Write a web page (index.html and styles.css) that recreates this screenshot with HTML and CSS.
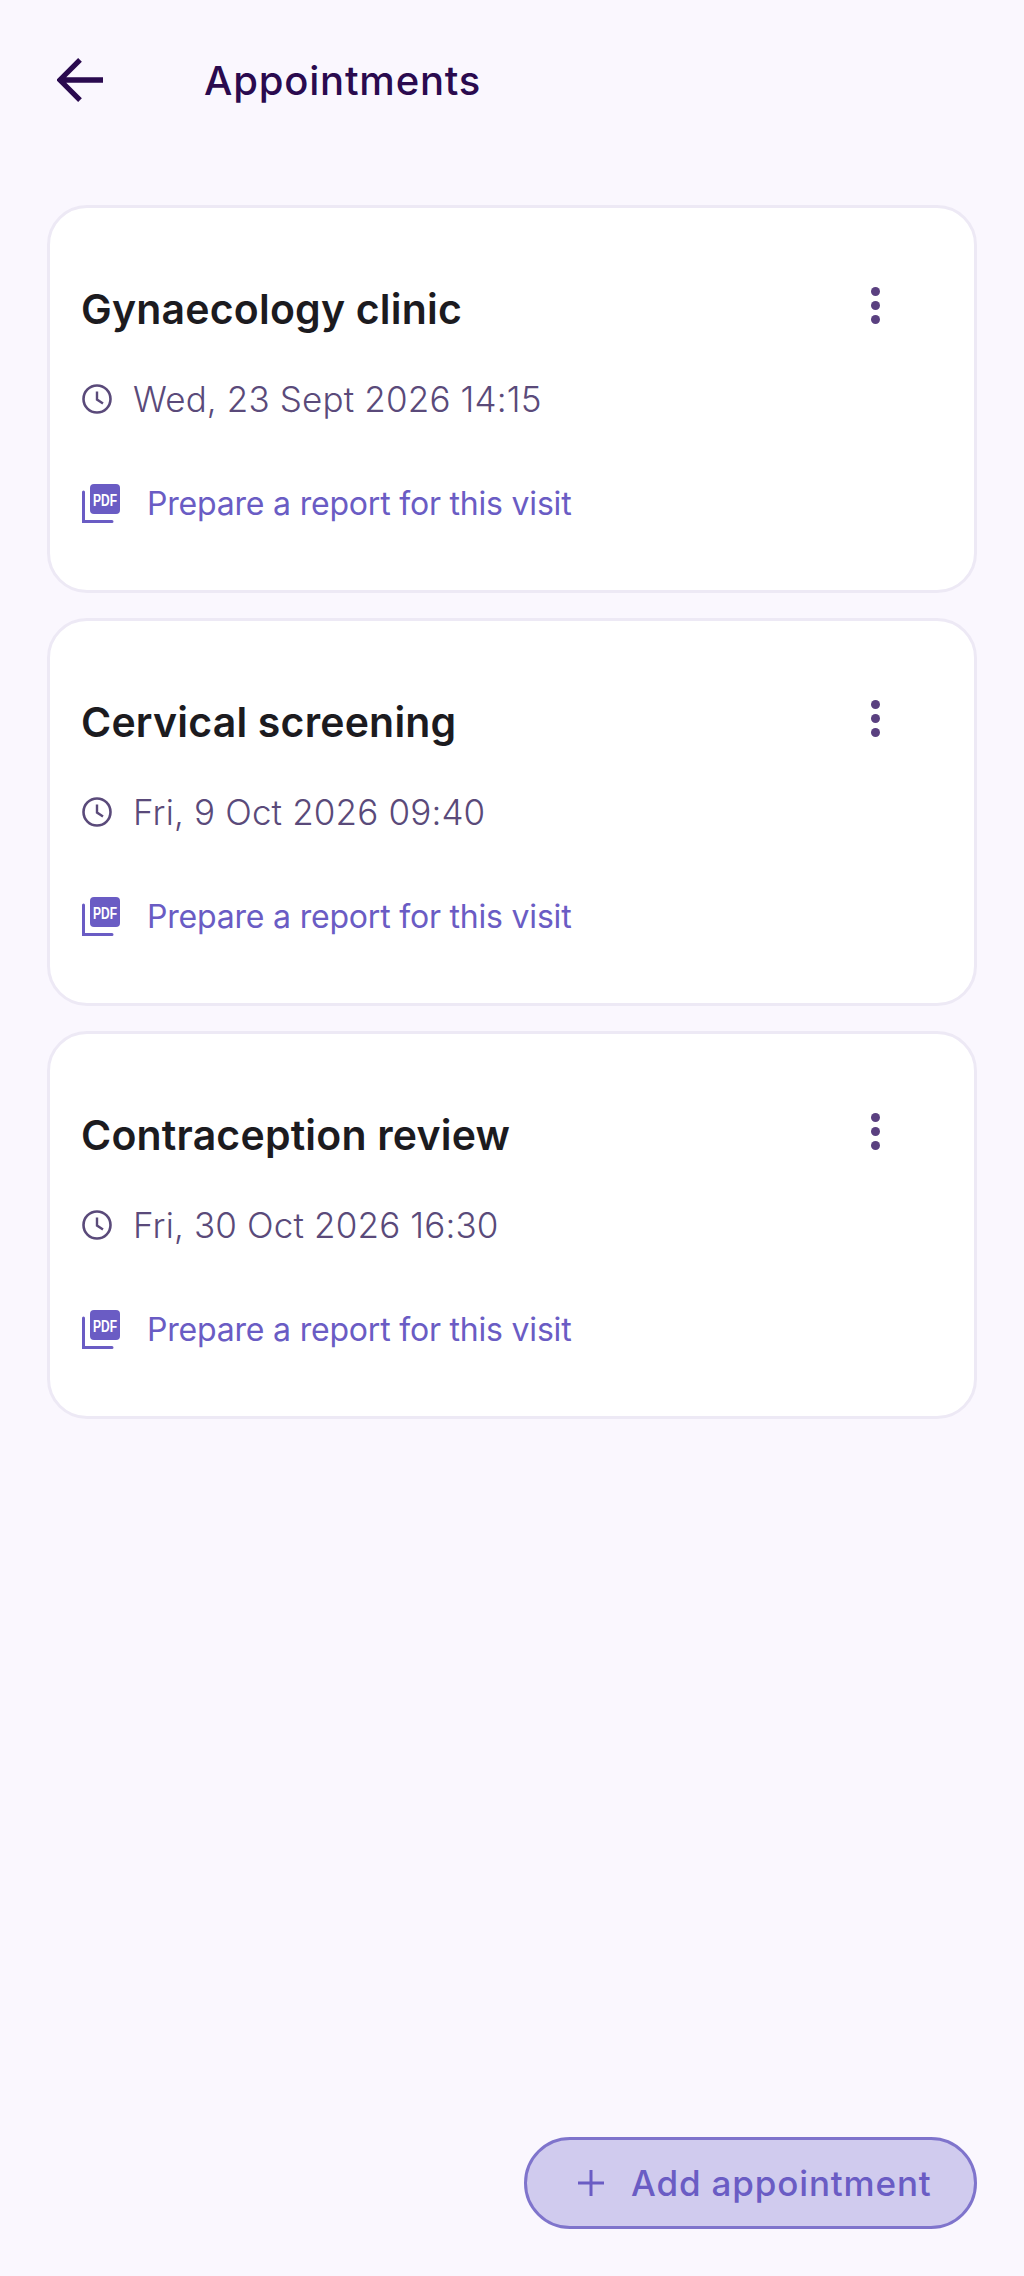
FILE: index.html
```html
<!DOCTYPE html>
<html>
<head>
  <meta charset="utf-8">
  <title>Appointments</title>
  <link rel="stylesheet" href="styles.css">
</head>
<body>
  <div class="header">
    <svg class="back-icon" viewBox="0 0 48 48"><path d="M24 3 L3 24 L24 45 M3 24 H48" fill="none" stroke="#2a0a4f" stroke-width="5.5"/></svg>
    <h1>Appointments</h1>
  </div>

  <div class="list">
    <div class="card">
      <div class="card-top">
        <h2>Gynaecology clinic</h2>
        <div class="more"><span></span><span></span><span></span></div>
      </div>
      <div class="when">
        <svg class="clock-icon" viewBox="0 0 30 30"><circle cx="15" cy="15" r="13.5" fill="none" stroke="#5a4a7a" stroke-width="2.6"/><path d="M15 7.5 V15.5 L21 19.5" fill="none" stroke="#5a4a7a" stroke-width="2.4"/></svg>
        <span>Wed, 23 Sept 2026 14:15</span>
      </div>
      <div class="report">
        <svg class="pdf-icon" viewBox="0 0 39 39"><path d="M1.5 8 V37.5 H30" fill="none" stroke="#6a5cc4" stroke-width="3" stroke-linecap="round"/><rect x="8" y="0" width="30" height="30" rx="4" fill="#6a5cc4"/><text transform="translate(11 22) scale(1 1.45)" class="pdf-text">PDF</text></svg>
        <span>Prepare a report for this visit</span>
      </div>
    </div>

    <div class="card">
      <div class="card-top">
        <h2>Cervical screening</h2>
        <div class="more"><span></span><span></span><span></span></div>
      </div>
      <div class="when">
        <svg class="clock-icon" viewBox="0 0 30 30"><circle cx="15" cy="15" r="13.5" fill="none" stroke="#5a4a7a" stroke-width="2.6"/><path d="M15 7.5 V15.5 L21 19.5" fill="none" stroke="#5a4a7a" stroke-width="2.4"/></svg>
        <span>Fri, 9 Oct 2026 09:40</span>
      </div>
      <div class="report">
        <svg class="pdf-icon" viewBox="0 0 39 39"><path d="M1.5 8 V37.5 H30" fill="none" stroke="#6a5cc4" stroke-width="3" stroke-linecap="round"/><rect x="8" y="0" width="30" height="30" rx="4" fill="#6a5cc4"/><text transform="translate(11 22) scale(1 1.45)" class="pdf-text">PDF</text></svg>
        <span>Prepare a report for this visit</span>
      </div>
    </div>

    <div class="card">
      <div class="card-top">
        <h2>Contraception review</h2>
        <div class="more"><span></span><span></span><span></span></div>
      </div>
      <div class="when">
        <svg class="clock-icon" viewBox="0 0 30 30"><circle cx="15" cy="15" r="13.5" fill="none" stroke="#5a4a7a" stroke-width="2.6"/><path d="M15 7.5 V15.5 L21 19.5" fill="none" stroke="#5a4a7a" stroke-width="2.4"/></svg>
        <span>Fri, 30 Oct 2026 16:30</span>
      </div>
      <div class="report">
        <svg class="pdf-icon" viewBox="0 0 39 39"><path d="M1.5 8 V37.5 H30" fill="none" stroke="#6a5cc4" stroke-width="3" stroke-linecap="round"/><rect x="8" y="0" width="30" height="30" rx="4" fill="#6a5cc4"/><text transform="translate(11 22) scale(1 1.45)" class="pdf-text">PDF</text></svg>
        <span>Prepare a report for this visit</span>
      </div>
    </div>
  </div>

  <div class="footer">
    <button class="add-button">
      <svg class="plus-icon" viewBox="0 0 28 28"><path d="M14 1 V27 M1 14 H27" fill="none" stroke="#6a5cc4" stroke-width="3"/></svg>
      <span>Add appointment</span>
    </button>
  </div>
</body>
</html>
```

FILE: styles.css
```css
html, body {
  height: 100%;
}

body {
  margin: 0;
  height: 2276px;
  box-sizing: border-box;
  display: flex;
  flex-direction: column;
  padding: 0 47px 47px;
  background: #faf7fe;
  font-family: Inter, "Noto Sans", sans-serif;
}

.header {
  display: flex;
  align-items: center;
  height: 160px;
  padding-left: 10px;
}

.back-icon {
  width: 46px;
  height: 46px;
  flex-shrink: 0;
}

.header h1 {
  margin: 0 0 0 101px;
  font-size: 40px;
  font-weight: 500;
  letter-spacing: 0.8px;
  color: #2a0a4f;
}

.list {
  display: flex;
  flex-direction: column;
  gap: 25px;
  margin-top: 45px;
}

.card {
  height: 388px;
  box-sizing: border-box;
  padding: 0 31px;
  background: #fff;
  border: 3px solid #ede9f5;
  border-radius: 40px;
}

.card-top {
  display: flex;
  justify-content: space-between;
  align-items: center;
  height: 90px;
  margin-top: 56px;
}

.card-top h2 {
  margin: 0;
  font-size: 41px;
  font-weight: 600;
  letter-spacing: 0.2px;
  color: #1c1b1f;
}

.more {
  display: flex;
  flex-direction: column;
  gap: 5px;
  margin: -8px 63px 0 0;
}

.more span {
  width: 9px;
  height: 9px;
  border-radius: 50%;
  background: #5a4080;
}

.when {
  display: flex;
  align-items: center;
  gap: 21px;
  margin: 24px 0 0 1px;
  font-size: 35px;
  font-weight: 300;
  letter-spacing: 0.15px;
  color: #5a4a7a;
}

.clock-icon {
  width: 30px;
  height: 30px;
  flex-shrink: 0;
}

.report {
  display: flex;
  align-items: center;
  gap: 26px;
  margin: 64px 0 0 1px;
  font-size: 32px;
  letter-spacing: -0.2px;
  color: #6a5cc4;
}

.pdf-icon {
  width: 39px;
  height: 39px;
  flex-shrink: 0;
}

.pdf-text {
  font-family: "Liberation Sans", sans-serif;
  font-size: 12px;
  font-weight: 700;
  letter-spacing: 0;
  fill: #fff;
}

.footer {
  display: flex;
  justify-content: flex-end;
  margin-top: auto;
}

.add-button {
  display: flex;
  align-items: center;
  gap: 26px;
  width: 453px;
  height: 92px;
  box-sizing: border-box;
  padding: 0 0 0 50px;
  background: #d0cbee;
  border: 3px solid #7f74cc;
  border-radius: 46px;
  font-family: Inter, "Noto Sans", sans-serif;
  font-size: 35px;
  font-weight: 500;
  letter-spacing: 0.85px;
  color: #6a5cc4;
}

.plus-icon {
  width: 28px;
  height: 28px;
  flex-shrink: 0;
}
```
